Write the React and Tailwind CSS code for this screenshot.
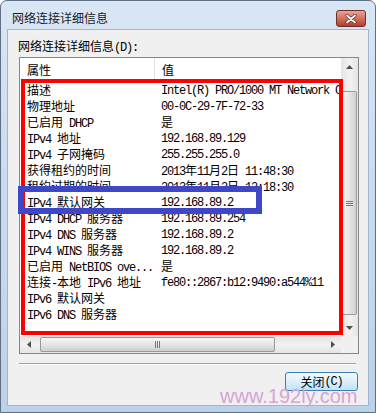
import React from "react";

const rows = [
  ["描述", "Intel(R) PRO/1000 MT Network Connection"],
  ["物理地址", "00-0C-29-7F-72-33"],
  ["已启用 DHCP", "是"],
  ["IPv4 地址", "192.168.89.129"],
  ["IPv4 子网掩码", "255.255.255.0"],
  ["获得租约的时间", "2013年11月2日 11:48:30"],
  ["租约过期的时间", "2013年11月2日 12:18:30"],
  ["IPv4 默认网关", "192.168.89.2"],
  ["IPv4 DHCP 服务器", "192.168.89.254"],
  ["IPv4 DNS 服务器", "192.168.89.2"],
  ["IPv4 WINS 服务器", "192.168.89.2"],
  ["已启用 NetBIOS ove...", "是"],
  ["连接-本地 IPv6 地址", "fe80::2867:b12:9490:a544%11"],
  ["IPv6 默认网关", ""],
  ["IPv6 DNS 服务器", ""],
];

// latin runs are half-width like SimSun, CJK runs full width
const Mixed = ({ text }) => {
  const parts = text.match(/[\x00-\x7f]+|[^\x00-\x7f]+/g) || [];
  return parts.map((p, i) =>
    /^[\x00-\x7f]/.test(p) ? (
      <span key={i} className="font-['Liberation_Mono',monospace] tracking-[-1.2px] whitespace-pre">
        {p}
      </span>
    ) : (
      <span key={i} className="font-['Noto_Sans_CJK_SC',sans-serif]">
        {p}
      </span>
    )
  );
};

const Arrow = ({ dir }) => {
  const pts = {
    up: "0,4 7,4 3.5,0",
    down: "0,0 7,0 3.5,4",
    left: "4,0 4,7 0,3.5",
    right: "0,0 0,7 4,3.5",
  }[dir];
  const vertical = dir === "up" || dir === "down";
  return (
    <svg width={vertical ? 7 : 4} height={vertical ? 4 : 7}>
      <polygon points={pts} fill="#505050" />
    </svg>
  );
};

const App = () => {
  return (
    <div className="relative w-[376px] h-[413px] overflow-hidden bg-white">
      <div className="w-full h-full flex flex-col rounded-t-[7px] border border-[#5f6f84] bg-gradient-to-b from-[#d9e6f5] via-[#c8daef] to-[#bcd2ea]">
        {/* title bar */}
        <div className="h-[28px] flex items-start justify-between pt-[9px] pl-[11px] pr-[9px]">
          <span className="text-[12px] leading-[16px] text-[#1b1b1b] font-['Noto_Sans_CJK_SC',sans-serif]">
            网络连接详细信息
          </span>
          <div className="w-[30px] h-[17px] rounded-[3px] border border-[#6e302a] bg-gradient-to-b from-[#e7a597] via-[#d2705f] to-[#b83b28] flex items-center justify-center">
            <svg width="12" height="10" viewBox="0 0 12 10">
              <path d="M2 1.5 L10 8.5 M10 1.5 L2 8.5" stroke="#5a2a24" strokeWidth="3.2" strokeLinecap="round" />
              <path d="M2 1.5 L10 8.5 M10 1.5 L2 8.5" stroke="#ffffff" strokeWidth="1.8" strokeLinecap="round" />
            </svg>
          </div>
        </div>

        {/* client area */}
        <div className="mx-[6px] h-[377px] border border-[#9fb5d0] bg-[#f0f0f0] pt-[8px] pl-[11px]">
          <div className="-ml-px h-[16px] leading-[16px] text-[12px] text-black">
            <Mixed text="网络连接详细信息(D):" />
          </div>

          {/* list box */}
          <div className="mt-[3px] w-[340px] h-[297px] border border-[#828790] bg-white flex flex-col text-[12px] text-black">
            <div className="flex h-[278px]">
              <div className="w-[321px] overflow-hidden">
                <div className="flex h-[24px] leading-[24px]">
                  <div className="w-[135px] pl-[7px] border-r border-[#e3e3e3]">
                    <Mixed text="属性" />
                  </div>
                  <div className="pl-[7px]">
                    <Mixed text="值" />
                  </div>
                </div>
                {rows.map(([name, value], i) => (
                  <div key={i} className="grid grid-cols-[141px_1fr] h-[16px] leading-[16px] whitespace-nowrap">
                    <div className="pl-[7px] overflow-hidden">
                      <Mixed text={name} />
                    </div>
                    <div className="overflow-hidden">
                      <Mixed text={value} />
                    </div>
                  </div>
                ))}
              </div>

              {/* vertical scrollbar */}
              <div className="w-[17px] flex flex-col bg-gradient-to-r from-[#e4e4e4] via-[#f2f2f2] to-[#e4e4e4]">
                <div className="h-[17px] flex items-center justify-center">
                  <Arrow dir="up" />
                </div>
                <div className="flex-1 pt-[16px] px-[1px]">
                  <div className="h-[224px] rounded-[2px] border border-[#9a9a9a] bg-gradient-to-r from-[#f6f6f6] via-[#e6e6e6] to-[#cfcfcf] flex flex-col items-center justify-center gap-[1px]">
                    <div className="w-[7px] h-px bg-[#7a7a7a]" />
                    <div className="w-[7px] h-px bg-[#7a7a7a]" />
                    <div className="w-[7px] h-px bg-[#7a7a7a]" />
                  </div>
                </div>
                <div className="h-[17px] flex items-center justify-center">
                  <Arrow dir="down" />
                </div>
              </div>
            </div>

            {/* horizontal scrollbar */}
            <div className="flex h-[17px]">
              <div className="w-[321px] flex bg-gradient-to-b from-[#e4e4e4] via-[#f2f2f2] to-[#e4e4e4]">
                <div className="w-[17px] flex items-center justify-center">
                  <Arrow dir="left" />
                </div>
                <div className="flex-1 py-[1px] pl-[3px]">
                  <div className="w-[235px] h-full rounded-[2px] border border-[#9a9a9a] bg-gradient-to-b from-[#f6f6f6] via-[#e6e6e6] to-[#cfcfcf] flex items-center justify-center gap-[1px]">
                    <div className="w-px h-[7px] bg-[#7a7a7a]" />
                    <div className="w-px h-[7px] bg-[#7a7a7a]" />
                    <div className="w-px h-[7px] bg-[#7a7a7a]" />
                  </div>
                </div>
                <div className="w-[17px] flex items-center justify-center">
                  <Arrow dir="right" />
                </div>
              </div>
              <div className="w-[17px] bg-[#f0f0f0]" />
            </div>
          </div>

          {/* separator */}
          <div className="mt-[9px] w-[337px] h-[2px] border-t border-[#a0a0a0] border-b border-b-white" />

          {/* close button */}
          <div className="mt-[7px] ml-[266px] w-[73px] h-[19px] rounded-[3px] border border-[#3c7fb1] bg-gradient-to-b from-[#f2f9fe] via-[#dcf0fb] to-[#bfe3f8] flex items-center justify-center text-[12px] leading-[16px] text-black">
            <Mixed text="关闭(C)" />
          </div>
        </div>
      </div>

      {/* annotation boxes */}
      <div className="absolute left-[21px] top-[79px] w-[322px] h-[256px] border-[4px] border-[#ff0000]" />
      <div className="absolute left-[18px] top-[186px] w-[244px] h-[28px] border-[6px] border-[#3f47c9]" />

      {/* watermark */}
      <div className="absolute left-[220px] top-[385px] text-[20px] leading-[22px] text-[#d8a3d6] font-['Liberation_Sans',Arial,sans-serif]">
        www.192ly.com
      </div>
    </div>
  );
};

export default App;
